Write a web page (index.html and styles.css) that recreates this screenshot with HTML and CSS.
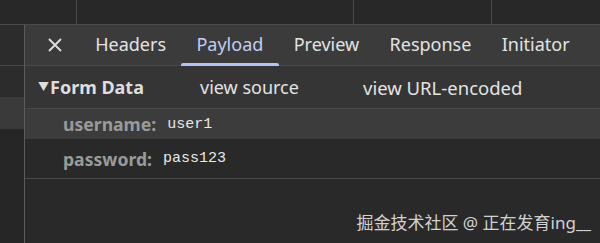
FILE: index.html
```html
<!DOCTYPE html>
<html>
<head>
<meta charset="utf-8">
<link rel="stylesheet" href="styles.css">
</head>
<body>
<div class="top">
  <div class="cell c1"></div>
  <div class="cell c2"></div>
  <div class="cell c3"></div>
  <div class="cell c4"></div>
</div>
<div class="main">
  <div class="side">
    <div class="side-tab"></div>
    <div class="side-gap"></div>
    <div class="side-sel"></div>
  </div>
  <div class="panel">
    <div class="tabs">
      <div class="close">
        <svg width="16" height="16" viewBox="0 0 16 16"><path d="M2 2 L14 14 M14 2 L2 14" stroke="#e0e0e0" stroke-width="1.8" fill="none"/></svg>
      </div>
      <div class="tab">Headers</div>
      <div class="tab active">Payload</div>
      <div class="tab">Preview</div>
      <div class="tab">Response</div>
      <div class="tab">Initiator</div>
    </div>
    <div class="section">
      <div class="sec-title"><span class="tri">▼</span>Form Data</div>
      <div class="link l1">view source</div>
      <div class="link l2">view URL-encoded</div>
    </div>
    <div class="row hover"><span class="key">username:</span><span class="val">user1</span></div>
    <div class="row pw"><span class="key">password:</span><span class="val">pass123</span></div>
    <div class="rest">
      <div class="wm">掘金技术社区 @ 正在发育ing__</div>
    </div>
  </div>
</div>
</body>
</html>
```
FILE: styles.css
```css
html, body { margin: 0; padding: 0; }
body {
  width: 600px;
  height: 243px;
  overflow: hidden;
  background: #282828;
  font-family: "Noto Sans", "Noto Sans CJK SC", sans-serif;
}
.top {
  display: flex;
  height: 24px;
  border-bottom: 1px solid #4a4a4a;
  background: #282828;
}
.cell { border-right: 1px solid #4a4a4a; }
.c1 { width: 76px; }
.c2 { width: 276px; }
.c3 { width: 137px; }
.c4 { flex: 1; border-right: none; }
.main { display: flex; height: 218px; }
.side {
  width: 24px;
  display: flex;
  flex-direction: column;
  background: #262626;
}
.side-tab { height: 40px; background: #2c2c2c; border-bottom: 1px solid #4a4a4a; }
.side-gap { height: 31px; background: #2c2c2c; }
.side-sel { height: 32px; background: #3a3a3a; }
.panel {
  flex: 1;
  border-left: 1px solid #5c5c5c;
  display: flex;
  flex-direction: column;
}
.tabs {
  height: 40px;
  background: #3b3b3b;
  border-bottom: 1px solid #4a4a4a;
  display: flex;
  align-items: center;
  font-size: 18px;
  color: #e3e3e3;
}
.close { width: 33px; margin-left: 22px; display: flex; align-items: center; }
.tab { position: relative; padding: 0 15.2px; height: 40px; line-height: 39px; }
.tab.active { color: #c2cdf2; }
.tab.active::after {
  content: "";
  position: absolute;
  left: 0; right: 0; bottom: -1px;
  height: 3px;
  border-radius: 2px 2px 0 0;
  background: #b6c2f2;
}
.section {
  height: 42px;
  background: #353535;
  border-bottom: 1px solid #4a4a4a;
  display: flex;
  align-items: center;
  font-size: 18px;
  color: #e3e3e3;
}
.sec-title { font-weight: bold; margin-left: 13px; width: 162px; color: #dedede; }
.tri { font-size: 11px; vertical-align: 3px; margin-right: 1px; }
.l1 { width: 163px; }
.l2 { font-size: 18.5px; }
.row {
  display: flex;
  align-items: center;
  padding-left: 38px;
}
.hover { height: 30px; background: #3c3c3c; }
.pw { height: 39px; background: #292929; border-bottom: 1px solid #4a4a4a; }
.key { font-weight: bold; font-size: 17.6px; color: #9a9a9a; margin-right: 11px; }
.val { font-family: "Liberation Mono", monospace; font-size: 15px; color: #e8e8e8; }
.rest { flex: 1; background: #292929; display: flex; justify-content: flex-end; align-items: flex-end; }
.wm { font-size: 17px; color: #d2d2d2; margin: 0 9px 9px 0; }
```
